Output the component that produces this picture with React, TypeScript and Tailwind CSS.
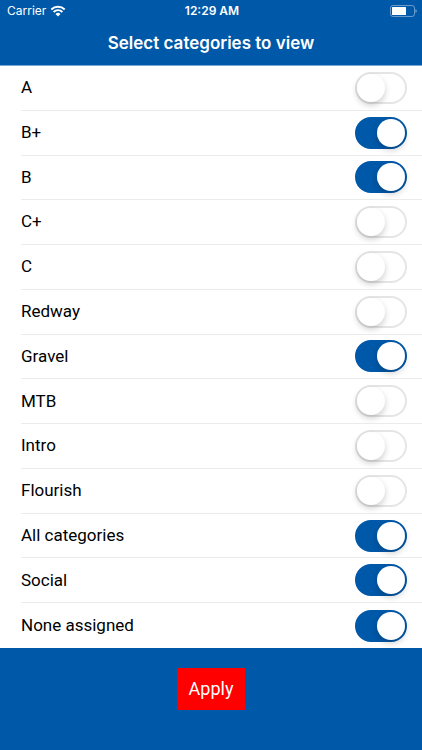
import React, { useState } from "react";

const initialCategories = [
  { name: "A", enabled: false },
  { name: "B+", enabled: true },
  { name: "B", enabled: true },
  { name: "C+", enabled: false },
  { name: "C", enabled: false },
  { name: "Redway", enabled: false },
  { name: "Gravel", enabled: true },
  { name: "MTB", enabled: false },
  { name: "Intro", enabled: false },
  { name: "Flourish", enabled: false },
  { name: "All categories", enabled: true },
  { name: "Social", enabled: true },
  { name: "None assigned", enabled: true },
];

const WifiIcon = () => (
  <svg className="w-4 h-3" viewBox="0 0 16 12" fill="none" aria-hidden="true">
    <path d="M1.3 4.5a9.5 9.5 0 0 1 13.4 0" stroke="white" strokeWidth="2" />
    <path d="M3.6 7a6.2 6.2 0 0 1 8.8 0" stroke="white" strokeWidth="1.9" />
    <path d="M5.5 9a3.6 3.6 0 0 1 5 0L8 11.4z" fill="white" />
  </svg>
);

const BatteryIcon = () => (
  <svg className="w-[27px] h-3" viewBox="0 0 27 12" fill="none" aria-hidden="true">
    <rect x="0.5" y="0.5" width="24" height="11" rx="2.5" stroke="white" strokeOpacity="0.4" />
    <rect x="2" y="2" width="14" height="8" rx="0.5" fill="white" />
    <path d="M25.5 4v4c.8-.4 1.2-1.1 1.2-2s-.4-1.6-1.2-2z" fill="white" fillOpacity="0.5" />
  </svg>
);

const App: React.FC = () => {
  const [categories, setCategories] = useState(initialCategories);

  const toggleCategory = (name: string) => {
    setCategories(
      categories.map((category) =>
        category.name === name
          ? { ...category, enabled: !category.enabled }
          : category
      )
    );
  };

  return (
    <div className="min-h-screen flex flex-col bg-white font-['Inter','Liberation_Sans',sans-serif]">
      <header className="bg-[#0058a8] text-white border-b border-[#75a9dc]">
        {/* Status bar */}
        <div className="h-[22px] pl-[7px] pr-[5px] grid grid-cols-3 items-center text-xs">
          <div className="flex items-center gap-1">
            <span>Carrier</span>
            <WifiIcon />
          </div>
          <span className="text-center font-semibold">12:29 AM</span>
          <div className="flex justify-end">
            <BatteryIcon />
          </div>
        </div>
        <h1 className="h-[43px] flex items-center justify-center text-[17px] font-semibold">
          Select categories to view
        </h1>
      </header>

      <ul className="flex-1 grid auto-rows-fr pl-[21px]">
        {categories.map((category) => (
          <li
            key={category.name}
            className="border-b border-[#ebebeb] last:border-b-0"
          >
            <label className="h-full flex items-center justify-between pr-[15px] font-['Roboto','Liberation_Sans',sans-serif] text-[17px] text-black">
              {category.name}
              <input
                type="checkbox"
                role="switch"
                checked={category.enabled}
                onChange={() => toggleCategory(category.name)}
                className="appearance-none w-[52px] h-8 rounded-full border-2 border-[#e5e5e5] bg-white cursor-pointer before:block before:size-7 before:rounded-full before:bg-white before:shadow-[0_3px_6px_rgba(0,0,0,0.2)] checked:border-[#0058a8] checked:bg-[#0058a8] checked:before:translate-x-5"
              />
            </label>
          </li>
        ))}
      </ul>

      <footer className="h-[102px] pt-5 bg-[#0058a8] flex justify-center items-start">
        <button className="bg-[#ff0000] text-white font-['Roboto','Liberation_Sans',sans-serif] text-lg px-3 h-[42px]">
          Apply
        </button>
      </footer>
    </div>
  );
};

export default App;
